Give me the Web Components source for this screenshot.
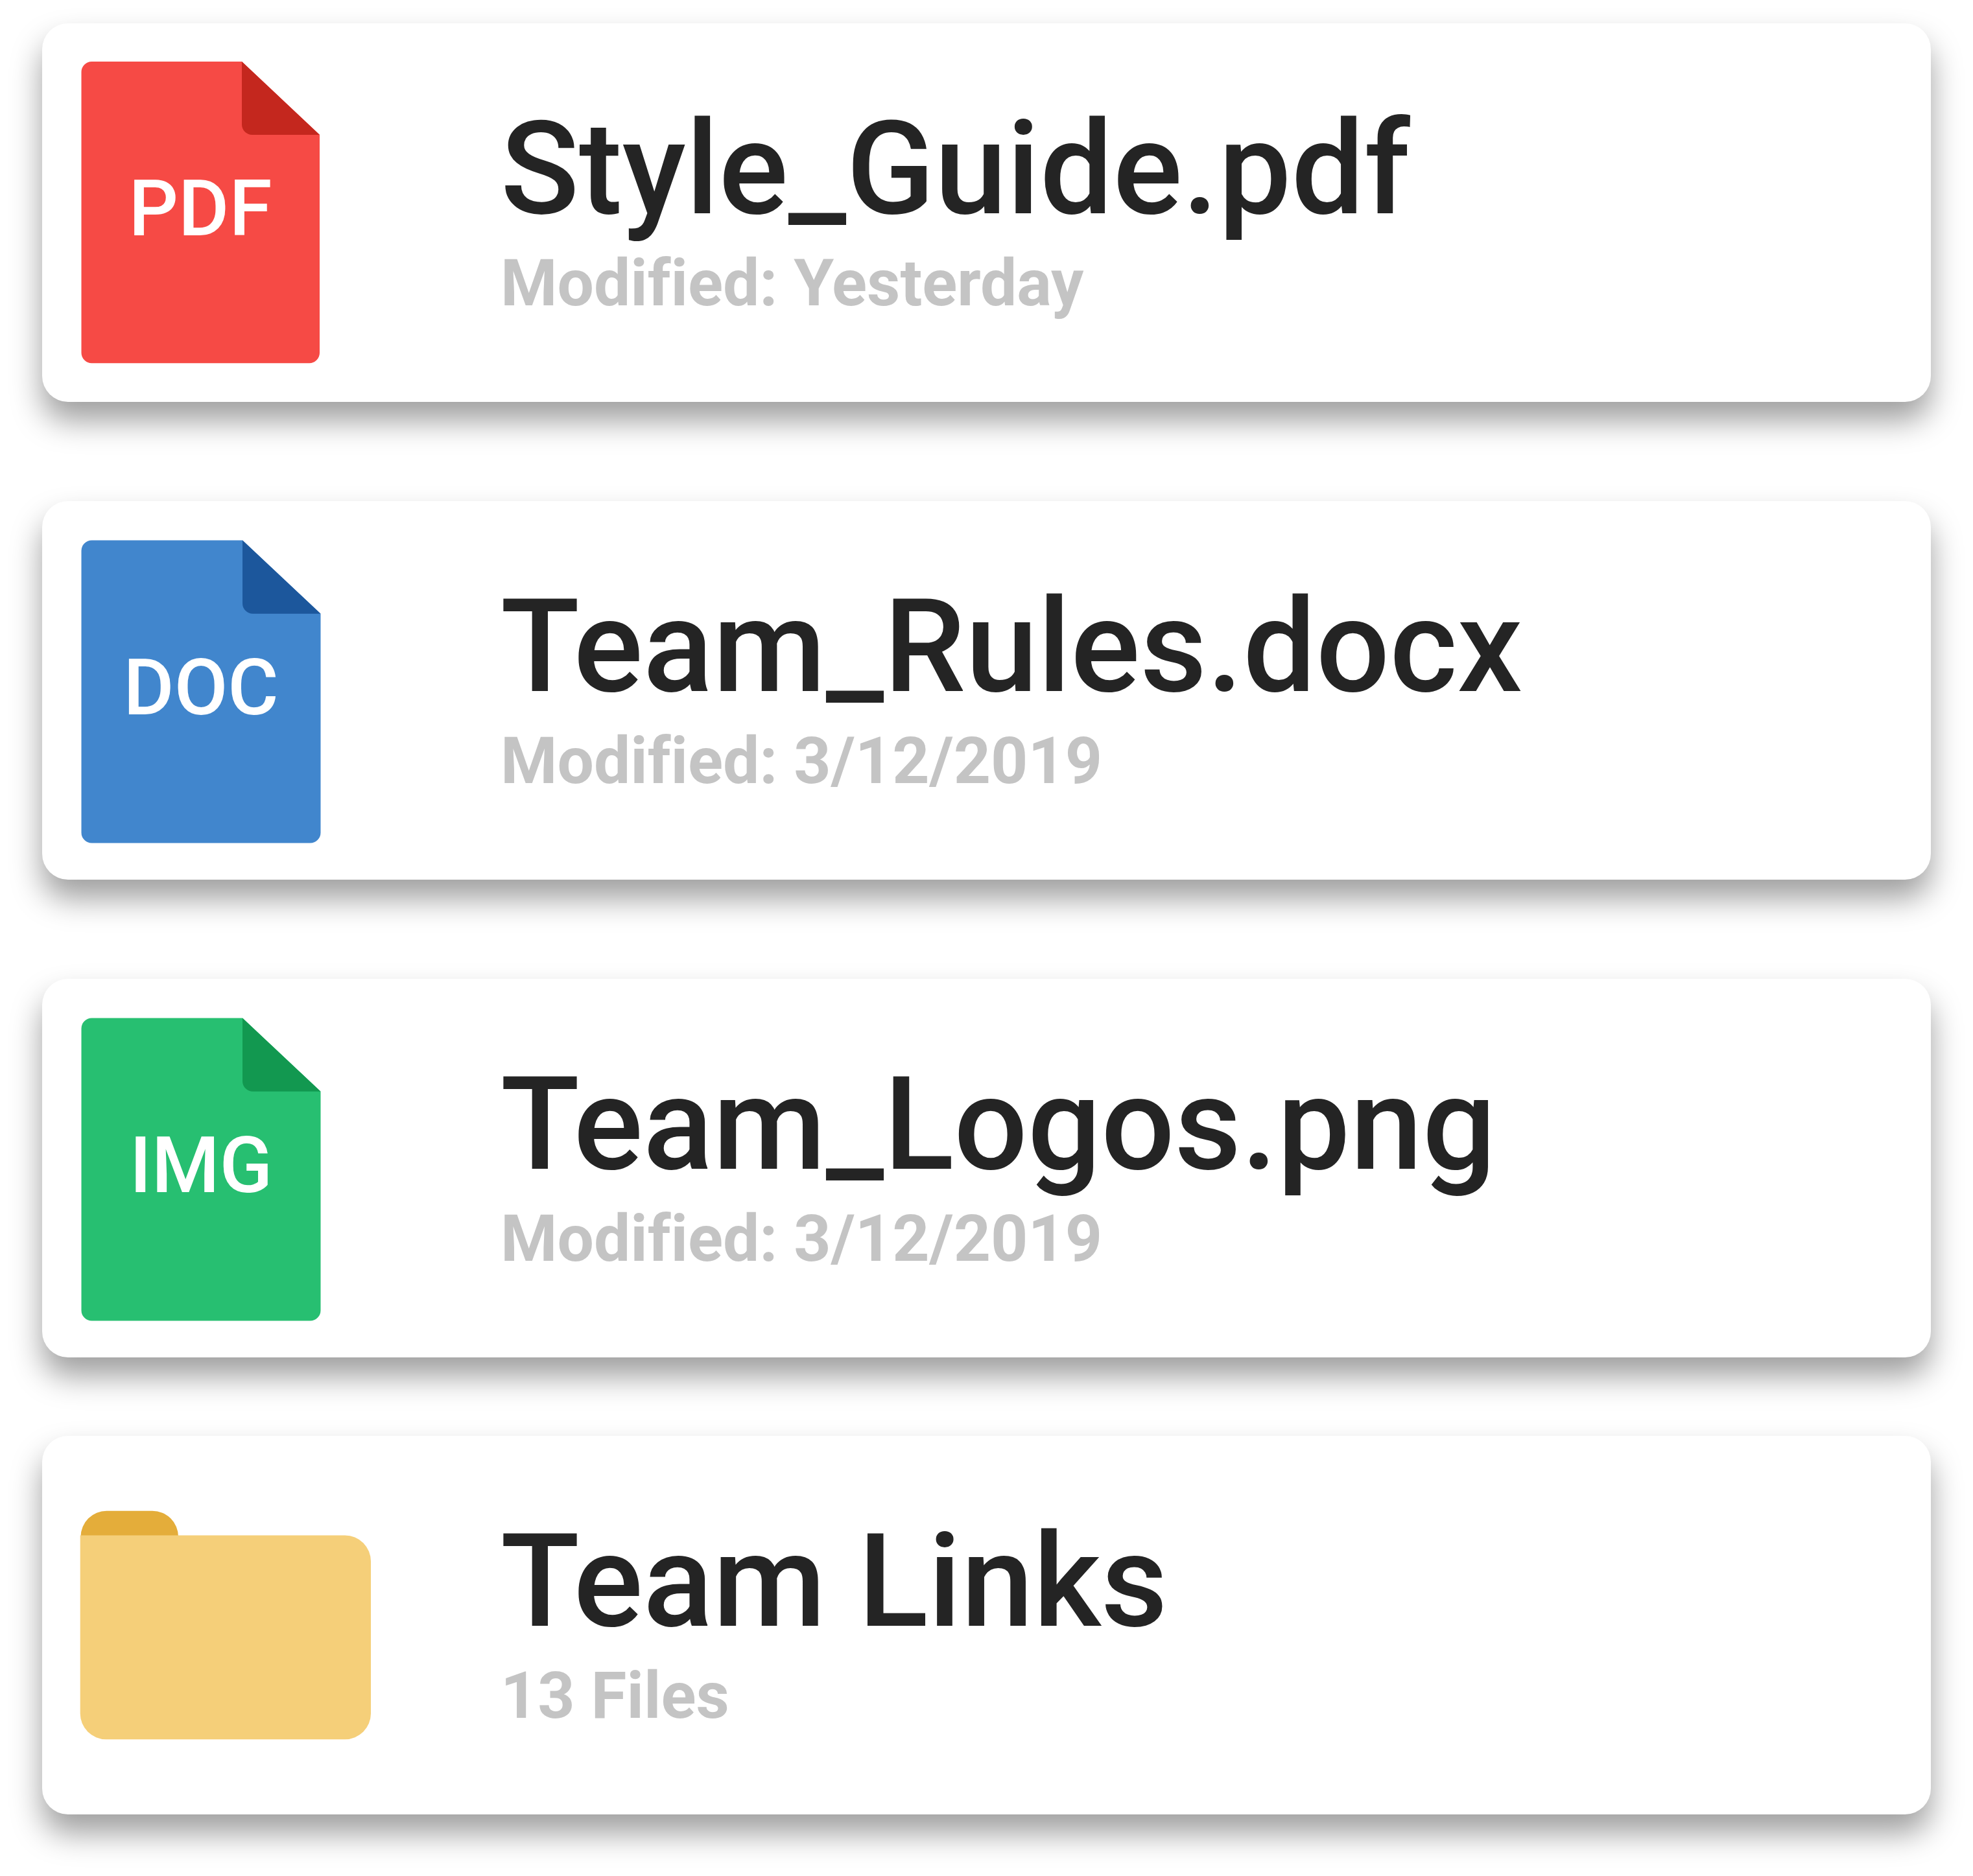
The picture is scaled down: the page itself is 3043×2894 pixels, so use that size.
<!DOCTYPE html>
<html lang="en">
<head>
<meta charset="utf-8">
<title>Team files</title>
<style>
  body { margin: 0; background: #fff; font-family: Roboto, "Liberation Sans", sans-serif; }
</style>
</head>
<body>
<file-list>
  <file-card>
    <file-icon slot="icon" kind="pdf"></file-icon>
    <span slot="name">Style_Guide.pdf</span>
    <span slot="detail">Modified: Yesterday</span>
  </file-card>
  <file-card>
    <file-icon slot="icon" kind="doc"></file-icon>
    <span slot="name">Team_Rules.docx</span>
    <span slot="detail">Modified: 3/12/2019</span>
  </file-card>
  <file-card>
    <file-icon slot="icon" kind="img"></file-icon>
    <span slot="name">Team_Logos.png</span>
    <span slot="detail">Modified: 3/12/2019</span>
  </file-card>
  <file-card slot="folders">
    <folder-icon slot="icon"></folder-icon>
    <span slot="name">Team Links</span>
    <span slot="detail">13 Files</span>
  </file-card>
</file-list>

<template id="file-list">
  <style>
    :host { display: flex; flex-direction: column; gap: 121px; padding: 36px 65px 95px; }
    section { display: flex; flex-direction: column; gap: 153px; }
  </style>
  <section><slot></slot></section>
  <section><slot name="folders"></slot></section>
</template>

<template id="file-card">
  <style>
    :host { display: block; }
    article {
      display: flex; align-items: flex-start;
      padding: 58px 58px 56px; border-radius: 40px; background: #fff;
      box-shadow: 0 29px 48px rgba(0, 0, 0, .38);
    }
    .icon { flex: 0 0 649px; }
    .text { flex: 1; min-width: 0; padding-top: 50px; }
    h2, p { margin: 0; white-space: nowrap; font-variant-ligatures: none; }
    h2 { font-size: 200px; font-weight: 500; line-height: 234px; color: #242424; }
    p { font-size: 100px; font-weight: 700; line-height: 118px; color: #c4c4c4; }
  </style>
  <article>
    <div class="icon"><slot name="icon"></slot></div>
    <div class="text">
      <h2><slot name="name"></slot></h2>
      <p><slot name="detail"></slot></p>
    </div>
  </article>
</template>

<template id="file-icon">
  <style>
    :host { display: block; }
    svg { display: block; width: 450px; height: 470px; }
    text { font-size: 120px; font-weight: 500; fill: #fff; text-anchor: middle; }
  </style>
  <svg viewBox="0 0 450 470" role="img">
    <path class="page"></path>
    <path class="fold"></path>
    <text></text>
  </svg>
</template>

<template id="folder-icon">
  <style>
    :host { display: block; }
    svg { display: block; width: 450px; height: 470px; }
  </style>
  <svg viewBox="0 0 450 470" role="img" aria-label="Folder">
    <path fill="#e4ad3a" d="M1.500 97.500A40 40 0 0 1 41.500 57.700H112A40 40 0 0 1 152 97.500V100H1.500Z"></path>
    <path fill="#f5cf79" d="M.7 95.500H409A40 40 0 0 1 449 135.500V370.200A40 40 0 0 1 409 410.200H40.700A40 40 0 0 1 .7 370.200Z"></path>
  </svg>
</template>

<script>
  const stamp = (host, id) => {
    const root = host.attachShadow({ mode: "open" });
    root.append(document.getElementById(id).content.cloneNode(true));
    return root;
  };

  const KINDS = {
    pdf: { label: "PDF", page: "#f64a45", fold: "#c4271e", left: 2.5, top: 1, right: 370, bottom: 466.2, foldX: 250, foldY: 114, x: 186, base: 269 },
    doc: { label: "DOC", page: "#4186cd", fold: "#1c579c", left: 2.5, top: 2.5, right: 371.5, bottom: 469.5, foldX: 251, foldY: 115.7, x: 187, base: 271 },
    img: { label: "IMG", page: "#27bf71", fold: "#129850", left: 2.5, top: 2.5, right: 371.5, bottom: 469.5, foldX: 251, foldY: 115.7, x: 187, base: 271 }
  };

  customElements.define("file-list", class extends HTMLElement {
    constructor() { super(); stamp(this, "file-list"); }
  });

  customElements.define("file-card", class extends HTMLElement {
    constructor() { super(); stamp(this, "file-card"); }
  });

  customElements.define("folder-icon", class extends HTMLElement {
    constructor() { super(); stamp(this, "folder-icon"); }
  });

  customElements.define("file-icon", class extends HTMLElement {
    connectedCallback() {
      if (this.shadowRoot) return;
      const root = stamp(this, "file-icon");
      const k = KINDS[this.getAttribute("kind")];
      const page = root.querySelector(".page");
      const fold = root.querySelector(".fold");
      const text = root.querySelector("text");
      page.setAttribute("fill", k.page);
      page.setAttribute("d", `M${k.left + 16} ${k.top}H${k.foldX}L${k.right} ${k.foldY}V${k.bottom - 16}a16 16 0 0 1 -16 16H${k.left + 16}a16 16 0 0 1 -16 -16V${k.top + 16}a16 16 0 0 1 16 -16Z`);
      fold.setAttribute("fill", k.fold);
      fold.setAttribute("d", `M${k.foldX} ${k.top}L${k.right} ${k.foldY}H${k.foldX + 16}a16 16 0 0 1 -16 -16Z`);
      text.setAttribute("x", k.x);
      text.setAttribute("y", k.base);
      text.textContent = k.label;
    }
  });
</script>
</body>
</html>
